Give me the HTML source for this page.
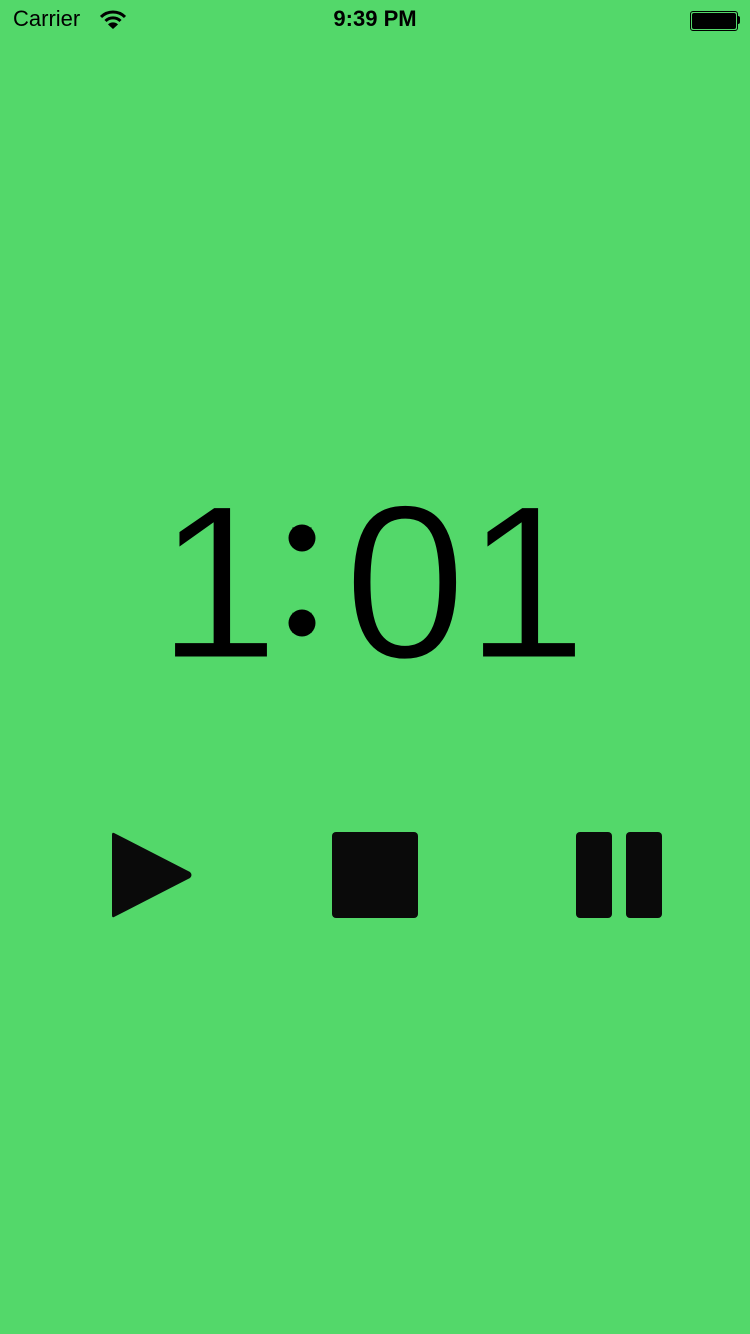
<!DOCTYPE html>
<html><head><meta charset="utf-8"><style>
html,body{margin:0;padding:0}
body{width:750px;height:1334px;background:#53d86a;position:relative;overflow:hidden;font-family:"Liberation Sans",sans-serif}
.sb{position:absolute;top:6px;font-size:22px;color:#000}
</style></head><body>
<div class="sb" style="left:13px">Carrier</div>
<svg style="position:absolute;left:100px;top:10px" width="26" height="20" viewBox="0 0 26 20">
<path d="M1 7 A17 17 0 0 1 25 7" stroke="#000" stroke-width="3" fill="none"/>
<path d="M5.5 11 A10.5 10.5 0 0 1 20.5 11" stroke="#000" stroke-width="3" fill="none"/>
<path d="M13 19 L8 14.5 A7 7 0 0 1 18 14.5 Z" fill="#000"/>
</svg>
<div class="sb" style="left:0;width:750px;text-align:center;font-weight:bold;font-size:22px">9:39 PM</div>
<div style="position:absolute;left:690px;top:11px;width:44px;height:16px;border:1px solid #000;border-radius:3px;padding:1px;box-sizing:content-box">
<div style="width:44px;height:16px;background:#000;border-radius:2px;margin:0"></div></div>
<div style="position:absolute;left:737px;top:16px;width:3px;height:8px;background:#000;border-radius:0 2px 2px 0"></div>
<svg style="position:absolute;left:0;top:0" width="750" height="1334">
<g font-family="Liberation Sans" font-size="220" fill="#000" text-anchor="middle" stroke="#53d86a" stroke-width="3">
<text x="218" y="658">1</text>
<text x="405" y="658">0</text>
<text x="526" y="658">1</text>
</g>
<text x="302" y="633" font-family="Liberation Sans" font-size="200" text-anchor="middle" fill="#000">:</text>
<circle cx="302" cy="538" r="13.5" fill="#000"/>
<circle cx="302" cy="623" r="13.5" fill="#000"/>
<path d="M114 833 L190 872 Q193 875 190 878 L114 917 Q112 918 112 915 L112 835 Q112 832 114 833 Z" fill="#0a0a0a"/>
<rect x="332" y="832" width="86" height="86" rx="4" fill="#0a0a0a"/>
<rect x="576" y="832" width="36" height="86" rx="4" fill="#0a0a0a"/>
<rect x="626" y="832" width="36" height="86" rx="4" fill="#0a0a0a"/>
</svg>
</body></html>
